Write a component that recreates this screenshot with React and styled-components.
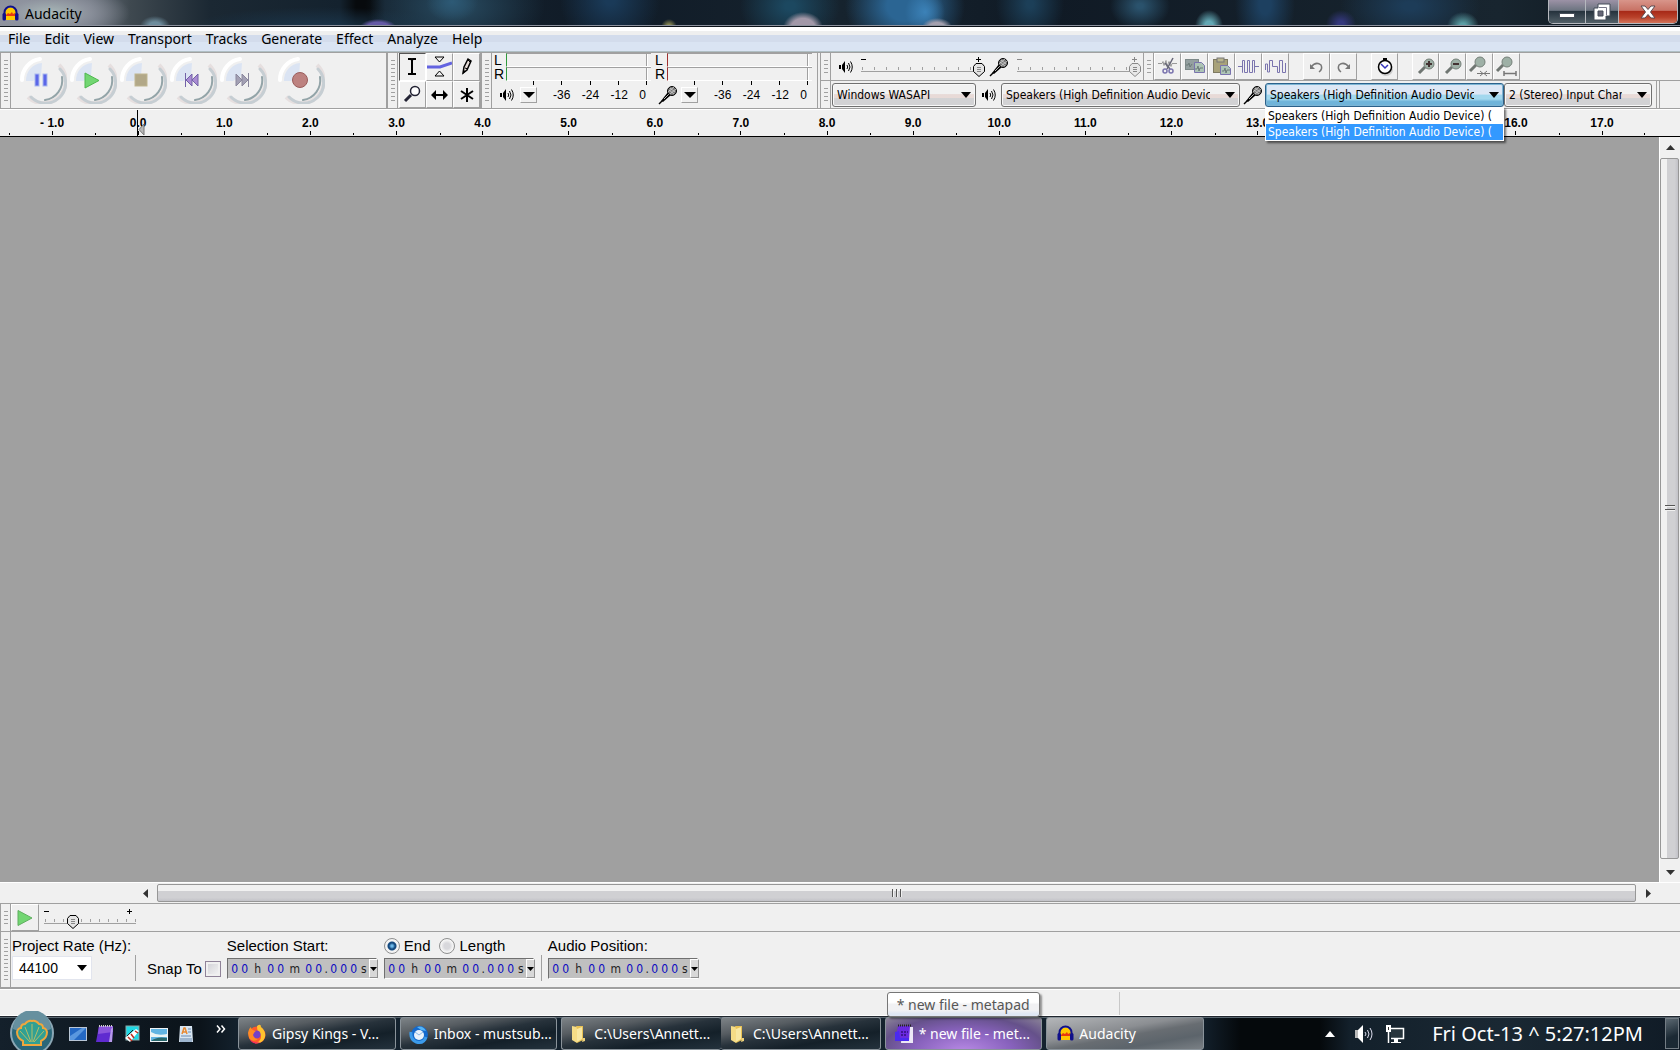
import styled, { createGlobalStyle, css } from 'styled-components';

const MENUS = ['File', 'Edit', 'View', 'Transport', 'Tracks', 'Generate', 'Effect', 'Analyze', 'Help'];
const RULER = Array.from({ length: 19 }, (_, i) => (i === 0 ? '- 1.0' : `${i - 1}.0`));
const DEVICE = 'Speakers (High Definition Audio Device) (loopback)';

/* ---------- icons ---------- */

const AudacityLogo = () => (
  <svg width="17" height="17" viewBox="0 0 17 17" aria-hidden="true">
    <path d="M3 12V8a5.500 5.500 0 0 1 11 0v4z" fill="#ffc800" />
    <path d="M4 10l2-2 2 1 2-2 1 2 2-1v3H4z" fill="#e83a10" />
    <path d="M4 12h9v3H4z" fill="#ffc800" />
    <path d="M2.500 10V7.500a6 6 0 0 1 12 0V10" fill="none" stroke="#10108a" strokeWidth="2" />
    <rect x="0.500" y="8" width="3.500" height="7.500" rx="1.500" fill="#10108a" />
    <rect x="13" y="8" width="3.500" height="7.500" rx="1.500" fill="#10108a" />
  </svg>
);

const SpeakerIcon = ({ size = 14 }) => (
  <svg width={size} height={size} viewBox="0 0 14 14" aria-hidden="true">
    <path d="M0 5h2v4H0zM3 5l3-4v12L3 9z" fill="#000" />
    <path d="M8 5q1.500 2 0 4M9.500 3q3 4 0 8M11.500 1.500q3.500 5.500 0 11" fill="none" stroke="#000" />
  </svg>
);

const MicIcon = () => (
  <svg width="20" height="20" viewBox="0 0 20 20" aria-hidden="true">
    <path d="M1 19l3-3" stroke="#000" strokeWidth="1.500" />
    <path d="M3 16L10 7l3 3-8 7z" fill="#000" />
    <path d="M6 14l5-5" stroke="#bbb" />
    <circle cx="14" cy="6" r="4.500" fill="#777" stroke="#000" />
    <path d="M11 5l5 4M12 3l5 4M10 7l6-5M12 9l6-5" stroke="#ddd" strokeWidth="0.700" />
  </svg>
);

const Arrow = ({ w = 10, h = 6 }) => (
  <svg width={w} height={h} viewBox="0 0 10 6" preserveAspectRatio="none" aria-hidden="true">
    <path d="M0 0h10L5 6z" fill="#000" />
  </svg>
);

const glyphs = {
  Pause: (
    <g fill="#5b66e8" stroke="#a9b8ee">
      <rect x="16" y="18" width="4" height="12" />
      <rect x="24" y="18" width="4" height="12" />
    </g>
  ),
  Play: <path d="M16 17v15l14-7.500z" fill="#72d672" stroke="#4eb84e" />,
  Stop: <rect x="16" y="18" width="12" height="12" fill="#b2a888" stroke="#bfb691" />,
  'Skip to Start': (
    <g fill="#a98bd2" stroke="#7262a8">
      <path d="M16.500 17v14" />
      <path d="M23 18v12l-6-6zM29 18v12l-6-6z" />
    </g>
  ),
  'Skip to End': (
    <g fill="#a3a0b4" stroke="#8a879c">
      <path d="M17 18v12l6-6zM23 18v12l6-6z" />
      <path d="M29.500 17v14" />
    </g>
  ),
  Record: <circle cx="23" cy="24" r="7.500" fill="#bd8280" stroke="#9b5d5b" />,
};

const RoundButton = ({ name }) => (
  <svg width="48" height="48" viewBox="0 0 48 48" aria-hidden="true">
    <path d="M7 25A17 17 0 0 1 23 7l-1 13-8 5z" fill="#dbe4f3" />
    <path d="M9 41A22 22 0 0 0 40 9" fill="none" stroke="#e6dfdf" strokeWidth="4" />
    <path d="M12 41A20 20 0 0 0 41 13" fill="none" stroke="#c6ced3" strokeWidth="3" strokeLinecap="round" />
    <path d="M26 44A20 20 0 0 0 43 21" fill="none" stroke="#93a4a8" strokeWidth="2" strokeLinecap="round" />
    <path d="M3 24A21 21 0 0 1 21 3" fill="none" stroke="#fff" strokeWidth="4" strokeLinecap="round" />
    {glyphs[name]}
  </svg>
);

const toolIcons = {
  Selection: <path d="M8 5h3l1 1 1-1h3M8 20h3l1-1 1 1h3M12 6v13" fill="none" stroke="#000" strokeWidth="2" />,
  Envelope: (
    <>
      <path d="M0 13h13l12-4" fill="none" stroke="#6363e0" strokeWidth="3" />
      <path d="M8 3h9l-4.500 5zM8 22h9l-4.500-5z" fill="#f0f0f0" stroke="#000" />
    </>
  ),
  Draw: (
    <>
      <path d="M9 19l1-6 4-8 3 2-4 9z" fill="#e6dcd8" stroke="#000" strokeWidth="1.500" />
      <path d="M11 14l3 1M14 6l2 2" stroke="#000" />
      <path d="M9 16v4l3-3z" />
    </>
  ),
  Zoom: (
    <>
      <circle cx="15" cy="9" r="4.500" fill="#fff" stroke="#223" strokeWidth="1.500" />
      <path d="M11 13l-6 6" stroke="#223" strokeWidth="3" />
    </>
  ),
  'Time Shift': <path d="M9 8l-5 5 5 5v-4h7v4l5-5-5-5v4H9z" />,
  Multi: <path d="M13 6v14M7 9l12 8M19 9l-12 8" stroke="#000" strokeWidth="2" />,
};

const lens = (
  <>
    <path d="M12 13l-6 6" stroke="#6f7672" strokeWidth="3" />
    <circle cx="16" cy="10" r="5" fill="#9eb0a6" stroke="#758079" />
  </>
);

const wave = '#7a74ae';

const editIcons = {
  Cut: (
    <g fill="none">
      <path d="M3 9.500h4l1-2 1 4 2-5 1 6 2-5 2 5 1-3h5" stroke="#999" />
      <path d="M18 4l-6 11M10 9l5 6" stroke="#667" strokeWidth="1.500" />
      <circle cx="10" cy="17" r="2" stroke={wave} strokeWidth="1.500" />
      <circle cx="16" cy="17" r="2" stroke={wave} strokeWidth="1.500" />
    </g>
  ),
  Copy: (
    <g>
      <rect x="3.500" y="5.500" width="13" height="10" fill="#94a0a0" stroke="#7d8989" />
      <path d="M12.500 8.500h7l3 3v7h-10z" fill="#adc4b6" stroke={wave} />
      <path d="M4 11h2l1-2 1 4 2-3M13 15h2l1-3 1 5 1-3h3" fill="none" stroke="#6c7b79" />
    </g>
  ),
  Paste: (
    <g>
      <rect x="4.500" y="5.500" width="14" height="13" fill="#a8a27a" stroke="#7e7a62" />
      <rect x="8" y="4" width="7" height="4" fill="#b9b58f" stroke="#777" />
      <path d="M11.500 11.500h7l3 3v6h-10z" fill="#adc4b6" stroke={wave} />
      <path d="M13 17h2l1-3 1 5 1-3h3" fill="none" stroke="#6c7b79" />
    </g>
  ),
  Trim: <path d="M2 12.500h4.500v6V6.500h2v12h3v-12h2v12h3v-12h2v12-6H23" fill="none" stroke={wave} />,
  Silence: <path d="M2.500 16v-6h2v8h2V6.500h3v6h5v6h2v-12h3v12h3V9" fill="none" stroke={wave} />,
  Undo: (
    <>
      <path d="M7 13q5-6 10-2 2 4-2 7" fill="none" stroke="#777" strokeWidth="1.500" />
      <path d="M6 10v5h5z" fill="#777" />
    </>
  ),
  Redo: (
    <>
      <path d="M18 13q-5-6-10-2-2 4 2 7" fill="none" stroke="#777" strokeWidth="1.500" />
      <path d="M19 10v5h-5z" fill="#777" />
    </>
  ),
  Timer: (
    <>
      <circle cx="14" cy="15" r="7" fill="#ccc" />
      <circle cx="13" cy="13" r="6.500" fill="#fff" stroke="#000" strokeWidth="1.500" />
      <path d="M11 5h4M13 4v3" stroke="#000" strokeWidth="2" />
      <path d="M9 10l4 4 3-3" fill="none" stroke="#33b" strokeWidth="1.500" />
    </>
  ),
  'Zoom In': <>{lens}<path d="M13 10h6M16 7v6" stroke="#433" strokeWidth="2" /></>,
  'Zoom Out': <>{lens}<path d="M13 10h6" stroke="#433" strokeWidth="2" /></>,
  'Fit Selection': (
    <>
      <g transform="translate(-3 -2)">{lens}</g>
      <path d="M10 19.500h13M13 17l3 2.500-3 2.500M20 17l-3 2.500 3 2.500" fill="none" stroke="#777" />
    </>
  ),
  'Fit Project': (
    <>
      <g transform="translate(-3 -2)">{lens}</g>
      <path d="M10 19.500h12M10 17v5M22 17v5" fill="none" stroke="#777" strokeWidth="1.500" />
    </>
  ),
};

const EDIT_GROUPS = [
  ['Cut', 'Copy', 'Paste', 'Trim', 'Silence'],
  ['Undo', 'Redo'],
  ['Timer'],
  ['Zoom In', 'Zoom Out', 'Fit Selection', 'Fit Project'],
];

const FirefoxIcon = () => (
  <svg width="20" height="20" viewBox="0 0 20 20" aria-hidden="true">
    <circle cx="10" cy="11" r="8.500" fill="#ff5a2a" />
    <path d="M10 2q4-3 4 1 5 4 4 10-2 6-8 6 6-4 3-10-3-1-3-7z" fill="#ffc22e" />
    <circle cx="9.500" cy="10.500" r="4" fill="#7440c8" />
    <path d="M1 9q1-5 3-6 0 3 5 4-2 1-3 4 1 4 5 4-6 4-9-1z" fill="#ff8a25" />
    <path d="M2 14q4 6 12 4l-2 1q-7 2-10-5z" fill="#f0246c" />
  </svg>
);

const ThunderbirdIcon = () => (
  <svg width="20" height="20" viewBox="0 0 20 20" aria-hidden="true">
    <circle cx="10.500" cy="10.500" r="8.500" fill="#1469cc" />
    <path d="M2 8q-1 7 5 10 8 2 10-5" fill="none" stroke="#3c9bea" strokeWidth="3" />
    <circle cx="10" cy="11" r="5" fill="#e9f2fb" />
    <path d="M6 8l4 3 4-3" fill="none" stroke="#8bb8e8" />
    <path d="M8 3q6-2 9 4l-5-1z" fill="#55b4f6" />
  </svg>
);

const FolderIcon = () => (
  <svg width="16" height="20" viewBox="0 0 16 20" aria-hidden="true">
    <path d="M2 2l5 1v16l-5-3z" fill="#f5dc86" />
    <path d="M6 2h7v14l-6 3V5z" fill="#e8c154" />
    <path d="M7 5l5-2v12l-5 3z" fill="#f8e7a2" />
    <path d="M13 14h2v3l-3 1z" fill="#eed27c" />
  </svg>
);

const NotepadIcon = () => (
  <svg width="20" height="20" viewBox="0 0 20 20" aria-hidden="true">
    <path d="M8 3h11v16H7z" fill="#ece8f6" />
    <path d="M4 2h12l-1 15H1z" fill="#6a2ae0" />
    <path d="M1 17V8l4-1 1 7h9v3z" fill="#4a2af0" />
    <path d="M4 1.500h13" stroke="#222" strokeWidth="2" strokeDasharray="1 1" />
    <path d="M7 8h7M7 11h6" stroke="#33107e" strokeWidth="1.500" strokeDasharray="2 1" />
  </svg>
);

const ShellOrb = () => (
  <svg width="44" height="44" viewBox="0 0 44 44" aria-hidden="true">
    <circle cx="22" cy="22" r="21" fill="#2a6779" stroke="#8ba6b4" strokeWidth="2" />
    <path d="M3 18a19 19 0 0 1 38 0q-19 8-38 0z" fill="#66909f" />
    <path
      d="M13 34v-4q-6-3-6-9 1-4 4-4 0-4 4-4 3-4 7-3 4-1 7 3 4 0 4 4 3 0 4 4 0 6-6 9v4z"
      fill="#31a093"
      stroke="#efa73c"
      strokeWidth="2"
    />
    <path d="M20 31L10 20M21 31l-6-15M22 31V13M23 31l6-15M24 31l10-11" stroke="#b6bd68" />
  </svg>
);

const quickIcons = {
  'Show desktop': (
    <>
      <rect x="1" y="3" width="18" height="14" fill="#b9c6d6" />
      <rect x="2" y="4" width="16" height="12" fill="#2468c4" />
      <path d="M2 12L14 4h4L6 16H2z" fill="#5a97df" />
    </>
  ),
  Metapad: (
    <>
      <path d="M4 2h14l-1 16H1z" fill="#5f2bd0" />
      <path d="M4 2h14v6L3 10z" fill="#8a55dc" />
      <path d="M16 5l2-2-1 15h-3z" fill="#b79aea" />
      <path d="M4 2h14" stroke="#ccc" strokeWidth="2" strokeDasharray="1 1" />
    </>
  ),
  Editor: (
    <>
      <rect x="4" y="2" width="13" height="14" fill="#20d8e4" stroke="#8aa" />
      <path d="M3 14L14 5l3 2-9 11z" fill="#fff" />
      <path d="M6 13l4 4M9 10l3 4M13 7l3 2" stroke="#c03020" strokeWidth="1.500" />
      <path d="M5 12l6-6" stroke="#222" />
    </>
  ),
  Pictures: (
    <>
      <rect x="1" y="4" width="18" height="14" fill="#eef3f6" />
      <rect x="2" y="5" width="16" height="12" fill="#61b4e2" />
      <path d="M2 8q6 4 16 2v3H2z" fill="#eaf4f4" />
      <path d="M2 17q6-5 16-3v3z" fill="#28676b" />
    </>
  ),
  WordPad: (
    <>
      <path d="M4 2h12l1 16H3z" fill="#d9e6f2" />
      <path d="M6 10l2-6h1l2 6M7 8h3" fill="none" stroke="#e88932" strokeWidth="1.500" />
      <path d="M12 5h3M12 8h3M5 12h10" stroke="#6d8db4" />
      <path d="M4 14h12v4H4z" fill="#9fb6cf" />
    </>
  ),
};

/* ---------- app ---------- */

const Slider = ({ label, value, disabled, speed }) => (
  <SliderBox $speed={speed} $off={disabled}>
    <SliderMarks>
      <svg width="5" height="7"><path d="M0 3.500h5" stroke="currentColor" /></svg>
      <svg width="5" height="7"><path d="M0 3.500h5M2.500 1v5" stroke="currentColor" /></svg>
    </SliderMarks>
    <Range type="range" aria-label={label} defaultValue={value} disabled={disabled} $speed={speed} />
  </SliderBox>
);

const Meter = ({ color, icon, label }) => (
  <MeterBox>
    {['L', 'R'].map((ch) => (
      <Channel key={ch}>
        <span>{ch}</span>
        <Bar $color={color} />
      </Channel>
    ))}
    <MeterTicks>{[1, 2, 3, 4, 5].map((n) => <i key={n} />)}</MeterTicks>
    <MeterFoot>
      <MeterIcon>{icon}</MeterIcon>
      <MeterButton aria-label={label}><Arrow w={12} /></MeterButton>
      <Scale>
        <span>-36</span>
        <span>-24</span>
        <span>-12</span>
        <span>0</span>
      </Scale>
    </MeterFoot>
  </MeterBox>
);

const TimeField = ({ label }) => (
  <Time role="group" aria-label={label}>
    <Digits>
      {[...'00 h 00 m 00.000 s'].filter((c) => c !== ' ').map((c, i) => (
        <Digit key={i} $unit={c !== '0'} $c={c}>{c}</Digit>
      ))}
    </Digits>
    <TimeButton aria-label={`${label} format`}><Arrow w={7} h={4} /></TimeButton>
  </Time>
);

const App = () => {
  return (
    <Window>
      <GlobalStyle />
      <TitleBar>
        <Caption>
          <AudacityLogo />
          Audacity
        </Caption>
        <Controls>
          <Control $w={36} aria-label="Minimize">
            <svg width="16" height="16"><rect x="0.500" y="9.500" width="15" height="4" fill="#fff" stroke="#444c58" /></svg>
          </Control>
          <Control $w={33} aria-label="Restore">
            <svg width="18" height="18" viewBox="0 0 18 18">
              <path d="M5 1h12v12h-4v4H1V5h4z" fill="#fff" stroke="#444c58" />
              <path d="M5 8h5v5H5z" fill="#667" stroke="#444c58" />
              <path d="M6 4.500h7.500V12" fill="none" stroke="#778" />
            </svg>
          </Control>
          <Control $w={59} $close aria-label="Close">
            <svg width="16" height="14" viewBox="0 0 16 14">
              <path d="M1 1h4l3 3.500L11 1h4l-4.500 6 4.500 6h-4L8 9.500 5 13H1l4.500-6z" fill="#fff" stroke="#5a4a50" />
            </svg>
          </Control>
        </Controls>
      </TitleBar>
      <MenuBar>
        {MENUS.map((m) => <MenuItem key={m}>{m}</MenuItem>)}
      </MenuBar>

      <ToolDock>
        <Transport>
          <Grabber />
          <RoundButtons>
            {Object.keys(glyphs).map((name) => (
              <Round key={name} aria-label={name}><RoundButton name={name} /></Round>
            ))}
          </RoundButtons>
        </Transport>
        <Group>
          <Grabber />
          <Tools>
            {Object.keys(toolIcons).map((name, i) => (
              <ToolButton key={name} aria-label={name} $down={i === 0}>
                <svg width="25" height="25" viewBox="0 0 25 25">{toolIcons[name]}</svg>
              </ToolButton>
            ))}
          </Tools>
        </Group>
        <Group>
          <Grabber />
          <Meters>
            <Meter color="#2f9a3c" icon={<SpeakerIcon />} label="Playback meter" />
            <Meter color="#a03030" icon={<MicIcon />} label="Recording meter" />
          </Meters>
        </Group>
        <DockRows>
          <DockRow>
            <Grabber />
            <Mixer>
              <SpeakerIcon />
              <Slider label="Playback volume" value={100} />
              <MicIcon />
              <Slider label="Recording volume" value={100} disabled />
            </Mixer>
            <Grabber />
            <EditTools>
              {EDIT_GROUPS.map((group) => (
                <EditGroup key={group[0]}>
                  {group.map((name) => (
                    <EditButton key={name} aria-label={name}>
                      <svg width="25" height="25" viewBox="0 0 25 25">{editIcons[name]}</svg>
                    </EditButton>
                  ))}
                </EditGroup>
              ))}
            </EditTools>
          </DockRow>
          <DockRow>
            <Grabber />
            <Devices>
              <Combo $w={144}>
                <ComboSelect aria-label="Audio host"><option>Windows WASAPI</option></ComboSelect>
                <ComboArrow><Arrow /></ComboArrow>
              </Combo>
              <DeviceIcon><SpeakerIcon /></DeviceIcon>
              <Combo $w={239}>
                <ComboSelect aria-label="Playback device"><option>{DEVICE}</option></ComboSelect>
                <ComboArrow><Arrow /></ComboArrow>
              </Combo>
              <DeviceIcon><MicIcon /></DeviceIcon>
              <Combo $w={239}>
                <ComboSelect aria-label="Recording device" $open><option>{DEVICE}</option></ComboSelect>
                <ComboArrow><Arrow /></ComboArrow>
                <Options role="listbox" aria-label="Recording devices">
                  <Option role="option" aria-selected="false">Speakers (High Definition Audio Device) (</Option>
                  <Option role="option" aria-selected="true" $active>Speakers (High Definition Audio Device) (</Option>
                </Options>
              </Combo>
              <Combo $w={148}>
                <ComboSelect aria-label="Recording channels"><option>2 (Stereo) Input Channels</option></ComboSelect>
                <ComboArrow><Arrow /></ComboArrow>
              </Combo>
            </Devices>
          </DockRow>
        </DockRows>
      </ToolDock>

      <Ruler>
        {RULER.map((t, i) => (
          <Mark key={t}>
            {t}
            {i === 1 && (
              <PlayHead>
                <svg width="8" height="27">
                  <path d="M0.500 0v27" stroke="#000" />
                  <path d="M7 14v11l-5-5.500z" fill="#b8b8b8" stroke="#777" />
                </svg>
              </PlayHead>
            )}
          </Mark>
        ))}
      </Ruler>

      <TrackArea>
        <Canvas />
        <VScroll>
          <ScrollArrow aria-label="Scroll up"><svg width="9" height="5"><path d="M0 5h9L4.500 0z" fill="#333" /></svg></ScrollArrow>
          <Thumb $vertical><span /></Thumb>
          <ScrollArrow aria-label="Scroll down"><svg width="9" height="5"><path d="M0 0h9L4.500 5z" fill="#333" /></svg></ScrollArrow>
        </VScroll>
      </TrackArea>
      <HScroll>
        <ScrollArrow aria-label="Scroll left"><svg width="5" height="9"><path d="M5 0v9L0 4.500z" fill="#333" /></svg></ScrollArrow>
        <Thumb><span /></Thumb>
        <ScrollArrow aria-label="Scroll right"><svg width="5" height="9"><path d="M0 0v9l5-4.500z" fill="#333" /></svg></ScrollArrow>
      </HScroll>

      <PlaySpeed>
        <Grabber />
        <PlayButton aria-label="Play at speed">
          <svg width="16" height="16"><path d="M1 0.500v15L15 8z" fill="#72d672" stroke="#5fae5f" /></svg>
        </PlayButton>
        <Slider label="Playback speed" value={29} speed />
      </PlaySpeed>

      <SelectionBar>
        <Grabber />
        <RateBox>
          <label htmlFor="rate">Project Rate (Hz):</label>
          <RateSelect>
            <select id="rate"><option>44100</option></select>
            <ComboArrow><Arrow /></ComboArrow>
          </RateSelect>
        </RateBox>
        <Divider />
        <SnapLabel>
          Snap To
          <input type="checkbox" />
        </SnapLabel>
        <Field>
          <FieldHead>Selection Start:</FieldHead>
          <TimeField label="Selection Start" />
        </Field>
        <Field>
          <FieldHead>
            <Radio><input type="radio" name="mode" defaultChecked />End</Radio>
            <Radio><input type="radio" name="mode" />Length</Radio>
          </FieldHead>
          <TimeField label="Selection End" />
        </Field>
        <Divider />
        <Field>
          <FieldHead>Audio Position:</FieldHead>
          <TimeField label="Audio Position" />
        </Field>
      </SelectionBar>
      <StatusBar>
        <span />
      </StatusBar>

      <TaskBar>
        <Start aria-label="Start"><ShellOrb /></Start>
        <QuickLaunch>
          {Object.keys(quickIcons).map((name) => (
            <button key={name} aria-label={name}>
              <svg width="20" height="20" viewBox="0 0 20 20">{quickIcons[name]}</svg>
            </button>
          ))}
        </QuickLaunch>
        <More aria-label="More">
          <svg width="10" height="8"><path d="M1 0.500L4 4 1 7.500M5.500 0.500l3 3.500-3 3.500" fill="none" stroke="#fff" strokeWidth="1.500" /></svg>
        </More>
        <Tasks>
          <Task><FirefoxIcon />Gipsy Kings - V...</Task>
          <Task><ThunderbirdIcon />Inbox - mustsub...</Task>
          <TaskPair>
            <Task $folder><FolderIcon />C:\Users\Annett...</Task>
            <Task $folder><FolderIcon />C:\Users\Annett...</Task>
          </TaskPair>
          <Task $tone="purple">
            <NotepadIcon />* new file - met...
            <Tip role="tooltip">* new file - metapad</Tip>
          </Task>
          <Task $tone="active"><AudacityLogo />Audacity</Task>
        </Tasks>
        <Tray>
          <svg width="10" height="6"><path d="M0 6h10L5 0z" fill="#fff" /></svg>
          <TrayIcons>
            <svg width="20" height="20" viewBox="0 0 20 20">
              <path d="M1 6h3v8H1z" fill="#bbb" />
              <path d="M4 6l5-5v18l-5-5z" fill="#fff" />
              <path d="M11 8q2 2 0 4M13.500 6q3 4 0 8M16 4q4 6 0 12" fill="none" stroke="#dde" />
            </svg>
            <svg width="20" height="20" viewBox="0 0 20 20">
              <path d="M5 4.500h13.500v10H6" fill="#27343c" stroke="#fff" strokeWidth="1.500" />
              <path d="M6 18h10v1H6zM9 15h4v3H9z" fill="#fff" />
              <rect x="1" y="1" width="5" height="7" fill="#fff" />
              <path d="M3 3h1v3H3z" fill="#333" />
              <path d="M3.500 8v11" stroke="#fff" strokeWidth="1.500" />
            </svg>
          </TrayIcons>
          <Clock>Fri Oct-13 ^ 5:27:12PM</Clock>
        </Tray>
        <ShowDesktop aria-label="Show desktop" />
      </TaskBar>
    </Window>
  );
};

export default App;

/* ---------- styles ---------- */

const ui = '"Noto Sans", "Open Sans", sans-serif';
const tahoma = '"DejaVu Sans Condensed", "DejaVu Sans", sans-serif';
const arial = '"Liberation Sans", Arial, sans-serif';

const GlobalStyle = createGlobalStyle`
  * {
    box-sizing: border-box;
  }

  body {
    margin: 0;
    background: #f0f0f0;
    color: #000;
    font-family: ${arial};
  }

  button {
    margin: 0;
    padding: 0;
    border: 0;
    background: none;
    font: inherit;
    color: inherit;
  }

  svg {
    display: block;
    flex: none;
  }
`;

const Window = styled.div`
  display: flex;
  flex-direction: column;
  min-height: 100vh;
  overflow: hidden;
`;

const TitleBar = styled.header`
  display: flex;
  justify-content: space-between;
  height: 27px;
  padding: 0 2px;
  border-bottom: 1px solid #0c1219;
  box-shadow: inset 0 -1px #8d929e;
  background:
    radial-gradient(ellipse 80px 28px at 50px 13px, #a9b8b8 0%, #9297a2cc 50%, transparent 100%),
    radial-gradient(ellipse 15px 10px at 155px 26px, #6d8c9c 40%, transparent),
    radial-gradient(ellipse 18px 8px at 378px 27px, #655aa6 60%, transparent),
    radial-gradient(ellipse 8px 8px at 669px 27px, #8a8a54 30%, transparent),
    radial-gradient(ellipse 20px 16px at 803px 28px, #a298a8 60%, transparent),
    radial-gradient(ellipse 15px 9px at 937px 27px, #a4a0ae 50%, transparent),
    radial-gradient(ellipse 14px 16px at 1209px 26px, #63a8b4 30%, transparent),
    radial-gradient(ellipse 15px 14px at 1341px 24px, #34387c 20%, transparent),
    radial-gradient(ellipse 16px 14px at 1463px 26px, #5b9ea4 20%, transparent),
    radial-gradient(ellipse 20px 22px at 925px 12px, #3c82b8, transparent),
    radial-gradient(ellipse 60px 50px at 905px 6px, #2b6593 30%, transparent),
    radial-gradient(ellipse 26px 20px at 452px 2px, #2d5a76, transparent),
    radial-gradient(ellipse 90px 50px at 455px 6px, #26475c 10%, transparent),
    radial-gradient(ellipse 50px 40px at 790px 6px, #1c4860 10%, transparent),
    radial-gradient(ellipse 50px 50px at 610px 0, #1a3a58 10%, transparent),
    radial-gradient(ellipse 130px 20px at 320px 27px, #1b354a, transparent),
    radial-gradient(ellipse 30px 24px at 1140px 6px, #2a526c 10%, transparent),
    radial-gradient(ellipse 34px 40px at 1030px 4px, #1c3f58 10%, transparent),
    radial-gradient(ellipse 30px 50px at 1265px 4px, #1d4060 20%, transparent),
    radial-gradient(ellipse 70px 40px at 1410px 6px, #1d3c58 10%, transparent),
    linear-gradient(90deg, #8b8e9b 0, #686f7a 90px, #3f4950 130px, #1b2833 210px, #14222e 340px, #070a0d 356px, #070a0d 370px, #15222e 385px, #101b27 600px, #16232e 840px, #101a25 1050px, #18252f 1500px, #0d151c 1680px);
`;

const Caption = styled.div`
  display: flex;
  align-items: center;
  gap: 6px;
  padding-top: 1px;
  font: 14px/26px ${ui};
`;

const Controls = styled.div`
  display: flex;
  align-items: stretch;
  height: 24px;
  border: 1px solid #b5b8be;
  border-top: 0;
  border-radius: 0 0 5px 5px;
  overflow: hidden;
`;

const Control = styled.button`
  display: flex;
  justify-content: center;
  align-items: center;
  width: ${({ $w }) => $w}px;
  background: linear-gradient(#9c92a6 0%, #6c7480 45%, #26333e 50%, #526068 100%);

  & + & {
    border-left: 1px solid #b5b8be;
  }

  ${({ $close }) =>
    $close &&
    css`
      background: linear-gradient(#d8958a 0%, #c87265 45%, #a82a18 50%, #b9412a 75%, #d3735a 100%);
    `}
`;

const MenuBar = styled.nav`
  display: flex;
  gap: 14px;
  height: 25px;
  padding: 3px 8px 0;
  border-bottom: 1px solid #b0bfc4;
  background: linear-gradient(#fff 0 4px, #efefef 4px 8px, #d3dcec 8px 15px, #dae4f3 15px);
`;

const MenuItem = styled.button`
  align-self: flex-start;
  font: 14px/18px ${ui};
`;

const ToolDock = styled.section`
  display: flex;
  height: 57px;
  border-top: 1px solid #a0a0a0;
  border-bottom: 1px solid #a0a0a0;
`;

const Group = styled.div`
  display: flex;
  border-right: 1px solid #a0a0a0;
`;

const Transport = styled(Group)`
  width: 387px;
`;

const Grabber = styled.div`
  flex: none;
  width: 11px;
  border-left: 1px solid #a0a0a0;
  border-right: 1px solid #a0a0a0;
  background: repeating-linear-gradient(#f0f0f0 0 3px, #a0a0a0 3px 4px) center / 4px calc(100% - 8px) no-repeat;
`;

const RoundButtons = styled.div`
  display: flex;
  align-items: center;
  gap: 2px;
  padding: 0 0 2px 8px;
`;

const Round = styled.button`
  width: 48px;

  &:last-child {
    margin-left: 8px;
  }
`;

const Tools = styled.div`
  display: grid;
  grid-template-columns: repeat(3, 27px);
  grid-template-rows: 1fr 1fr;
  padding-left: 1px;
`;

const ToolButton = styled.button`
  display: flex;
  justify-content: center;
  align-items: center;
  border: 1px solid;
  border-color: ${({ $down }) => ($down ? '#555 #fff #fff #555' : '#fff #a0a0a0 #a0a0a0 #fff')};
`;

const Meters = styled.div`
  display: flex;
  gap: 4px;
  padding: 0 5px 0 2px;
`;

const MeterBox = styled.div`
  display: flex;
  flex-direction: column;
  width: 157px;
`;

const Channel = styled.div`
  display: grid;
  grid-template-columns: 12px 1fr;
  height: 14px;
  font: 14px/14px ${arial};
`;

const Bar = styled.div`
  border-top: 1px solid #a0a0a0;
  border-left: 1px solid ${({ $color }) => $color};
  border-bottom: 1px solid #fff;
  background: linear-gradient(90deg, #a0a0a0 1px, #fff 1px) right 3px top / 2px 100% no-repeat;
`;

const MeterTicks = styled.div`
  display: flex;
  justify-content: space-between;
  height: 4px;
  padding: 0 4px 0 39px;

  i {
    width: 1px;
    background: #000;
  }
`;

const MeterFoot = styled.div`
  display: flex;
  align-items: center;
  flex: 1;
  padding-bottom: 3px;
`;

const MeterIcon = styled.span`
  display: flex;
  justify-content: center;
  width: 26px;
`;

const MeterButton = styled.button`
  display: flex;
  justify-content: center;
  align-items: center;
  width: 17px;
  height: 16px;
  border: 1px solid;
  border-color: #fff #a0a0a0 #a0a0a0 #fff;
`;

const Scale = styled.div`
  display: flex;
  justify-content: space-between;
  flex: 1;
  padding: 0 5px 0 16px;
  font: 12px/16px ${arial};
`;

const DockRows = styled.div`
  display: flex;
  flex-direction: column;
  flex: 1;
  min-width: 0;
  padding-left: 2px;
`;

const DockRow = styled.div`
  display: flex;
  flex: 1;

  & + & {
    border-top: 1px solid #a0a0a0;
  }
`;

const Mixer = styled.div`
  display: flex;
  align-items: center;
  gap: 4px;
  padding: 0 2px 0 8px;
`;

const SliderBox = styled.div`
  display: flex;
  flex-direction: column;
  width: ${({ $speed }) => ($speed ? 92 : 128)}px;
  padding-left: ${({ $speed }) => ($speed ? 0 : 4)}px;
  color: ${({ $off }) => ($off ? '#888' : '#000')};
`;

const SliderMarks = styled.div`
  display: flex;
  justify-content: space-between;
  padding-right: 4px;
`;

const thumbSvg = (fill, stroke) =>
  `url("data:image/svg+xml,%3Csvg xmlns='http://www.w3.org/2000/svg' width='12' height='14'%3E%3Cpath d='M3 .5h6l2.500 3v5L6 13.500.5 8.500v-5z' fill='%23${fill}' stroke='%23${stroke}'/%3E%3Cpath d='M4 4.500h4M4 6.500h4M4 8.500h4' stroke='%23888'/%3E%3C/svg%3E")`;

const Range = styled.input`
  appearance: none;
  width: 100%;
  height: 14px;
  margin: 0;
  background:
    linear-gradient(#a0a0a0, #a0a0a0) 0 8px / 100% 1px no-repeat,
    repeating-linear-gradient(90deg, #a0a0a0 0 1px, transparent 1px ${({ $speed }) => ($speed ? 9 : 12)}px) 1px 4px / 100% 3px no-repeat;

  &::-webkit-slider-thumb {
    appearance: none;
    width: 12px;
    height: 14px;
    background: ${thumbSvg('e4e4e4', '000')};
  }

  &:disabled::-webkit-slider-thumb {
    background: ${thumbSvg('e8e8e8', '888')};
  }
`;

const EditTools = styled.div`
  display: flex;
  gap: 14px;
`;

const EditGroup = styled.div`
  display: flex;
`;

const EditButton = styled.button`
  display: flex;
  justify-content: center;
  align-items: center;
  width: 27px;
  border: 1px solid;
  border-color: #fff #a0a0a0 #a0a0a0 #fff;
`;

const Devices = styled.div`
  display: flex;
  align-items: center;
  flex: 1;
  min-width: 0;
  margin-right: 20px;
  padding-left: 1px;
  border-right: 4px double #a0a0a0;
`;

const DeviceIcon = styled.span`
  display: flex;
  justify-content: center;
  width: 25px;
`;

const Combo = styled.div`
  position: relative;
  flex: 0 1 ${({ $w }) => $w}px;
  min-width: 0;
  height: 24px;
`;

const ComboSelect = styled.select`
  appearance: none;
  width: 100%;
  height: 100%;
  padding: 0 29px 0 4px;
  border: 1px solid #707070;
  border-radius: 3px;
  box-shadow: inset 0 0 0 1px #f8f8f8;
  background: linear-gradient(#f1f1f1 0 45%, #e8dad7 48% 62%, #d2d2d4 66% 100%);
  color: #000;
  font: 12px/20px ${tahoma};
  overflow: hidden;

  ${({ $open }) =>
    $open &&
    css`
      border-color: #2c628b;
      box-shadow: inset 0 0 0 1px #7db5d4;
      background: linear-gradient(#dce7f5 0 46%, #a3d8ee 50% 68%, #6fb4d9 80% 100%);
    `}
`;

const ComboArrow = styled.span`
  position: absolute;
  top: 9px;
  right: 5px;
  pointer-events: none;
`;

const Options = styled.div`
  position: absolute;
  top: 100%;
  left: 0;
  right: 0;
  z-index: 5;
  padding: 1px;
  background: #fff;
  box-shadow: 2px 2px 2px #0008;
`;

const Option = styled.div`
  height: 16px;
  padding-left: 2px;
  overflow: hidden;
  white-space: nowrap;
  font: 12px/16px ${tahoma};
  background: ${({ $active }) => ($active ? '#3399ff' : '#fff')};
  color: ${({ $active }) => ($active ? '#fff' : '#000')};
`;

const Ruler = styled.div`
  display: flex;
  height: 28px;
  padding: 0 35px 0 9px;
  border-top: 1px solid #fff;
  border-bottom: 1px solid #000;
`;

const Mark = styled.div`
  position: relative;
  flex: 1;
  text-align: center;
  font: bold 12px/26px ${arial};
  background:
    linear-gradient(#000, #000) left bottom 1px / 1px 2px no-repeat,
    linear-gradient(#000, #000) center bottom 1px / 1px 4px no-repeat;

  &:last-child {
    background:
      linear-gradient(#000, #000) left bottom 1px / 1px 2px no-repeat,
      linear-gradient(#000, #000) right bottom 1px / 1px 2px no-repeat,
      linear-gradient(#000, #000) center bottom 1px / 1px 4px no-repeat;
  }
`;

const PlayHead = styled.span`
  position: absolute;
  top: 0;
  left: 42px;
`;

const TrackArea = styled.main`
  display: flex;
  flex: 1;
`;

const Canvas = styled.div`
  flex: 1;
  border-right: 1px solid #fff;
  background: #a0a0a0;
`;

const VScroll = styled.div`
  display: flex;
  flex-direction: column;
  width: 20px;
`;

const ScrollArrow = styled.button`
  display: flex;
  justify-content: center;
  align-items: center;
  flex: none;
  width: 20px;
  height: 20px;
`;

const Thumb = styled.div`
  display: flex;
  justify-content: center;
  align-items: center;
  flex: 1;
  margin: ${({ $vertical }) => ($vertical ? '1px 1px 3px 0' : '1px 2px')};
  border: 1px solid #979797;
  border-radius: 2px;
  background: linear-gradient(${({ $vertical }) => ($vertical ? '90deg' : '180deg')}, #f1f1f1 0 35%, #d0d0d3 38% 80%, #c2c2c8 100%);

  span {
    width: 10px;
    height: 8px;
    background: repeating-linear-gradient(${({ $vertical }) => ($vertical ? '180deg' : '90deg')}, #555 0 1px, #f0f0f0 1px 2px, transparent 2px 4px);
  }
`;

const HScroll = styled.div`
  display: flex;
  height: 22px;
  padding: 0 22px 0 135px;
  border-top: 1px solid #fff;
  border-bottom: 1px solid #a0a0a0;
`;

const PlaySpeed = styled.section`
  display: flex;
  height: 28px;
  border-bottom: 1px solid #a0a0a0;
`;

const PlayButton = styled.button`
  display: flex;
  justify-content: center;
  align-items: center;
  width: 28px;
  margin-right: 5px;
  border: 1px solid;
  border-color: #fff #a0a0a0 #a0a0a0 #fff;

  & + div {
    padding-top: 4px;
  }
`;

const SelectionBar = styled.section`
  display: flex;
  height: 57px;
  border-bottom: 2px solid #a0a0a0;
  font: 15px/18px ${arial};
`;

const RateBox = styled.div`
  display: flex;
  flex-direction: column;
  gap: 1px;
  width: 124px;
  padding: 5px 0 0 1px;
`;

const RateSelect = styled.div`
  position: relative;
  width: 80px;

  select {
    appearance: none;
    width: 100%;
    height: 24px;
    padding: 0 22px 0 6px;
    border: 1px solid #e2e5ee;
    background: #fff;
    color: #000;
    font: 14px/18px ${arial};
  }
`;

const Divider = styled.span`
  flex: none;
  align-self: flex-end;
  width: 1px;
  height: 26px;
  margin-bottom: 6px;
  background: #a0a0a0;
`;

const SnapLabel = styled.label`
  display: flex;
  align-items: center;
  align-self: flex-end;
  gap: 3px;
  height: 18px;
  margin: 0 6px 9px 11px;

  input {
    appearance: none;
    width: 16px;
    height: 16px;
    margin: 0;
    border: 1px solid #8f8398;
    background: linear-gradient(135deg, #cfcfd4, #f6f6f6);
    box-shadow: inset 0 0 0 2px #f0f0f0;
  }
`;

const Field = styled.div`
  display: flex;
  flex-direction: column;
  gap: 3px;
  padding: 5px 7px 0 0;

  ${Divider} + & {
    padding-left: 6px;
  }
`;

const FieldHead = styled.div`
  display: flex;
  gap: 9px;
  height: 18px;
`;

const Radio = styled.label`
  display: flex;
  align-items: center;
  gap: 4px;

  input {
    appearance: none;
    width: 16px;
    height: 16px;
    margin: 0;
    border: 1px solid #8e8f8f;
    border-radius: 50%;
    background: radial-gradient(#d8d8dc 0 30%, #f4f4f4 60%);
  }

  input:checked {
    background: radial-gradient(circle at 50% 50%, #6db8e8 0 1px, #154a80 3px 4px, #f4f4f4 5px);
  }
`;

const Time = styled.div`
  display: flex;
  width: 150px;
  height: 21px;
  border: 1px solid;
  border-color: #707070 #fff #fff #707070;
  background: #c0c0c0;
`;

const Digits = styled.div`
  display: flex;
  flex: 1;
  padding-left: 2px;
`;

const unitWidth = { h: 16, m: 18, '.': 5, s: 10 };

const Digit = styled.span`
  width: ${({ $c }) => unitWidth[$c] || 10}px;
  text-align: center;
  font: 12px/20px ${tahoma};
  color: ${({ $unit }) => ($unit ? '#222' : '#0a0ac0')};
`;

const TimeButton = styled.button`
  display: flex;
  justify-content: center;
  align-items: center;
  width: 9px;
  border: 1px solid;
  border-color: #fff #909090 #909090 #fff;
  background: #d8d8d8;
`;

const StatusBar = styled.footer`
  display: flex;
  height: 27px;
  padding-top: 2px;
  border-top: 1px solid #fff;
  border-bottom: 1px solid #fff;

  span {
    flex: 0 0 1120px;
    border-right: 1px solid #c8c8c8;
  }
`;

const TaskBar = styled.section`
  display: flex;
  align-items: stretch;
  height: 34px;
  border-top: 1px solid #20262e;
  box-shadow: inset 0 1px #59666f;
  background: linear-gradient(90deg, #14202b 0, #0b131a 200px, #14222e 240px, #14222e 1200px, #05090c 1240px, #05090c 1320px, #13202b 1350px, #1a2833 1500px, #101b26 1680px);
  color: #fff;
`;

const Start = styled.button`
  flex: none;
  width: 44px;
  height: 44px;
  margin: -6px 14px 0 10px;
`;

const QuickLaunch = styled.div`
  display: flex;
  align-items: center;
  gap: 7px;
`;

const More = styled.button`
  display: flex;
  align-items: flex-start;
  width: 42px;
  padding: 8px 0 0 20px;
`;

const Tasks = styled.div`
  display: grid;
  grid-template-columns: repeat(6, minmax(0, 1fr));
  flex: 0 1 966px;
  gap: 4px;
  min-width: 0;
`;

const tones = {
  normal: 'linear-gradient(170deg, #7d8387 0%, #565c61 28%, #27323b 48%, #142029 70%, #24323d 100%)',
  purple: 'radial-gradient(ellipse at 50% 110%, #b98be6 0%, #8862bd 45%, #65518a 75%, #8d8699 100%)',
  active: 'linear-gradient(170deg, #b4b6b9 0%, #8b8e92 40%, #686d72 55%, #5c646b 75%, #7a8085 100%)',
};

const Task = styled.button`
  position: relative;
  display: flex;
  align-items: center;
  gap: ${({ $folder }) => ($folder ? 8 : 5)}px;
  min-width: 0;
  padding-left: ${({ $tone }) => ($tone === 'active' ? 10 : 8)}px;
  border: 1px solid #8a939a;
  border-radius: 3px;
  background: ${({ $tone = 'normal' }) => tones[$tone]};
  font: 14px/30px ${ui};
  white-space: nowrap;
`;

const TaskPair = styled.div`
  display: grid;
  grid-template-columns: 1fr 1fr;
  grid-column: span 2;

  ${Task}:first-child {
    border-right: 0;
  }

  ${Task}:last-child {
    border-left: 0;
  }
`;

const Tip = styled.span`
  position: absolute;
  left: 1px;
  bottom: calc(100% + 1px);
  z-index: 6;
  width: 153px;
  height: 25px;
  border: 1px solid #767676;
  border-radius: 3px;
  background: linear-gradient(#fff 0 40%, #f1f1f3 50% 75%, #dfe7f3 90%);
  box-shadow: 2px 2px 2px #0006;
  color: #575757;
  text-align: center;
  font: 14px/23px ${ui};
`;

const Tray = styled.div`
  display: flex;
  align-items: center;
  gap: 19px;
  margin-left: auto;
`;

const TrayIcons = styled.div`
  display: flex;
  gap: 11px;
`;

const Clock = styled.time`
  margin: 0 22px 0 8px;
  font: 20px/32px ${ui};
  white-space: nowrap;
`;

const ShowDesktop = styled.button`
  width: 14px;
  margin: 1px 1px 1px 0;
  border: 1px solid #737c84;
  background: linear-gradient(160deg, #5b6871, #1b2934 60%);
`;
